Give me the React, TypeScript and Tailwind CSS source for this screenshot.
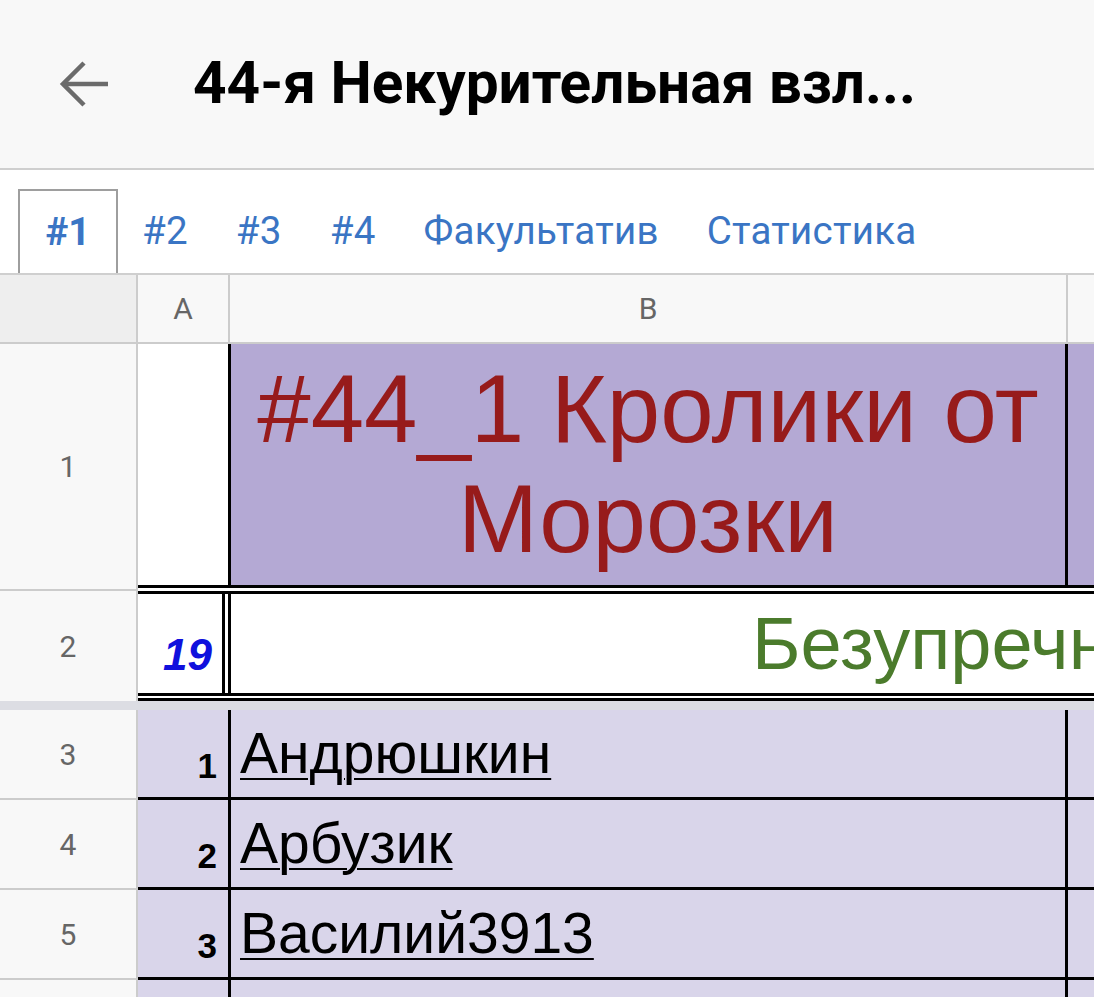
import React from "react";

const roboto = { fontFamily: "Roboto, 'Noto Sans', sans-serif" };
const arial = { fontFamily: "'Liberation Sans', Arial, sans-serif" };

function RowHead({ n, h }: { n?: string; h: string }) {
  return (
    <div
      className={`w-[138px] shrink-0 ${h} bg-[#f8f8f8] border-r-2 border-b-2 border-[#cccccc] flex items-center justify-center text-[30px] text-[#666666]`}
      style={roboto}
    >
      {n}
    </div>
  );
}

function DataRow({ n, num, name }: { n: string; num?: string; name?: string }) {
  return (
    <div className="flex h-[90px]">
      <RowHead n={n} h="h-[90px]" />
      <div
        className="w-[90px] shrink-0 bg-[#d9d5ea] border-b-[3px] border-black flex items-end justify-end pr-[11px] pb-[14px] text-[35px] font-bold text-black leading-none"
        style={arial}
      >
        {num}
      </div>
      <div
        className="w-[840px] shrink-0 bg-[#d9d5ea] border-l-[3px] border-r-[3px] border-b-[3px] border-black flex items-end pl-[9px] pb-[15px] text-[57px] text-black leading-none"
        style={arial}
      >
        {name && <span className="underline decoration-2 underline-offset-[5px]">{name}</span>}
      </div>
      <div className="flex-1 bg-[#d9d5ea] border-b-[3px] border-black" />
    </div>
  );
}

export default function App() {
  const tabs = ["#2", "#3", "#4", "Факультатив", "Статистика"];
  return (
    <div className="w-[1094px] h-[997px] overflow-hidden bg-white">
      {/* Top app bar */}
      <div className="h-[170px] bg-[#f8f8f8] border-b-2 border-[#cfcfcf] shadow-[0_2px_3px_rgba(0,0,0,0.08)] flex items-center">
        <svg className="ml-[48px] w-[72px] h-[72px]" viewBox="0 0 24 24" fill="none" stroke="#6b6b6b" strokeWidth="1.5">
          <path d="M20 12H5.5" />
          <path d="M12 5l-7 7 7 7" />
        </svg>
        <div className="ml-[73px] text-[58.5px] font-bold text-black" style={roboto}>
          44-я Некурительная взл...
        </div>
      </div>

      {/* Tabs */}
      <div className="h-[105px] bg-white border-b-2 border-[#cfcfcf] flex items-end" style={roboto}>
        <div className="ml-[18px] h-[84px] w-[100px] border-2 border-b-0 border-[#9e9e9e] flex items-center justify-center text-[38.5px] font-bold text-[#3a75c4]">
          #1
        </div>
        {tabs.map((t) => (
          <div key={t} className="h-[84px] px-[24px] flex items-center text-[38.5px] tracking-[0.25px] text-[#3a75c4]">
            {t}
          </div>
        ))}
      </div>

      {/* Column headers */}
      <div className="flex h-[69px] border-b-2 border-[#cccccc] text-[30px] text-[#666666]" style={roboto}>
        <div className="w-[138px] shrink-0 bg-[#eeeeee] border-r-2 border-[#cccccc]" />
        <div className="w-[92px] shrink-0 bg-[#f8f8f8] border-r-2 border-[#cccccc] flex items-center justify-center">A</div>
        <div className="w-[838px] shrink-0 bg-[#f8f8f8] border-r-2 border-[#cccccc] flex items-center justify-center">B</div>
        <div className="flex-1 bg-[#f8f8f8]" />
      </div>

      {/* Row 1 */}
      <div className="flex h-[247px]">
        <RowHead n="1" h="h-[247px]" />
        <div className="w-[90px] shrink-0 flex flex-col">
          <div className="flex-1 bg-white" />
          <div className="h-[3px] bg-black" />
          <div className="h-[3px] bg-white" />
        </div>
        <div className="w-[840px] shrink-0 flex flex-col">
          <div
            className="flex-1 bg-[#b4a9d4] border-l-[3px] border-r-[3px] border-black flex items-start justify-center pt-[10px] text-center text-[96px] leading-[110px] text-[#971b1b]"
            style={arial}
          >
            #44_1 Кролики от Морозки
          </div>
          <div className="h-[3px] bg-black" />
          <div className="h-[3px] bg-white" />
        </div>
        <div className="flex-1 flex flex-col">
          <div className="flex-1 bg-[#b4a9d4]" />
          <div className="h-[3px] bg-black" />
          <div className="h-[3px] bg-white" />
        </div>
      </div>

      {/* Row 2 */}
      <div className="flex h-[110px]">
        <div className="w-[138px] shrink-0 h-[110px] bg-[#f8f8f8] border-r-2 border-[#cccccc] flex items-center justify-center text-[30px] text-[#666666]" style={roboto}>
          2
        </div>
        <div className="w-[90px] shrink-0 flex flex-col">
          <div className="h-[3px] bg-black" />
          <div className="flex-1 flex">
            <div
              className="w-[84px] bg-white flex items-end justify-end pr-[10px] pb-[16px] text-[44px] font-bold italic text-[#1010dd] leading-none"
              style={arial}
            >
              19
            </div>
            <div className="w-[3px] bg-black" />
            <div className="flex-1 bg-white" />
          </div>
          <div className="h-[3px] bg-black" />
          <div className="h-[2px] bg-white" />
          <div className="h-[3px] bg-black" />
        </div>
        <div className="flex-1 flex flex-col min-w-0">
          <div className="h-[3px] bg-black" />
          <div
            className="flex-1 bg-white border-l-[3px] border-black flex items-center pl-[521px] whitespace-nowrap overflow-hidden text-[74px] text-[#4b7b2c] leading-none"
            style={arial}
          >
            Безупречный
          </div>
          <div className="h-[3px] bg-black" />
          <div className="h-[2px] bg-white" />
          <div className="h-[3px] bg-black" />
        </div>
      </div>

      {/* Frozen divider */}
      <div className="h-[9px] bg-[#dcdde3]" />

      <DataRow n="3" num="1" name="Андрюшкин" />
      <DataRow n="4" num="2" name="Арбузик" />
      <DataRow n="5" num="3" name="Василий3913" />
      <DataRow n="6" />
    </div>
  );
}
